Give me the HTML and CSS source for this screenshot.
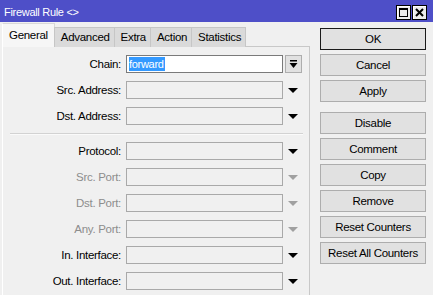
FILE: index.html
```html
<!DOCTYPE html>
<html lang="en">
<head>
    <meta charset="UTF-8">
    <title>Firewall Rule</title>
    <link rel="stylesheet" href="styles.css">
</head>
<body>
    <div class="titlebar">
        <span class="title">Firewall Rule &lt;&gt;</span>
        <div class="ctrls">
            <span class="ctrl"><span class="maxbox"></span></span>
            <span class="ctrl">
                <svg width="9" height="9" viewBox="0 0 9 9"><path d="M1 1 L8 8 M8 1 L1 8" stroke="#000" stroke-width="2"/></svg>
            </span>
        </div>
    </div>

    <div class="main">
        <div class="left">
            <div class="tabs">
                <div class="tab active">General</div>
                <div class="tab">Advanced</div>
                <div class="tab">Extra</div>
                <div class="tab">Action</div>
                <div class="tab">Statistics</div>
            </div>
            <div class="panel">
                <div class="row">
                    <label>Chain:</label>
                    <div class="field chain"><span class="sel">forward</span></div>
                    <div class="dropbtn">
                        <svg width="9" height="9" viewBox="0 0 9 9"><rect x="1" y="0" width="7" height="1.5" fill="#000"/><path d="M0.5 3 H8.5 L4.5 8 Z" fill="#000"/></svg>
                    </div>
                </div>
                <div class="row">
                    <label>Src. Address:</label>
                    <div class="field"></div>
                    <div class="arrow"></div>
                </div>
                <div class="row">
                    <label>Dst. Address:</label>
                    <div class="field"></div>
                    <div class="arrow"></div>
                </div>

                <div class="sep"></div>

                <div class="row">
                    <label>Protocol:</label>
                    <div class="field"></div>
                    <div class="arrow"></div>
                </div>
                <div class="row off">
                    <label>Src. Port:</label>
                    <div class="field"></div>
                    <div class="arrow"></div>
                </div>
                <div class="row off">
                    <label>Dst. Port:</label>
                    <div class="field"></div>
                    <div class="arrow"></div>
                </div>
                <div class="row off">
                    <label>Any. Port:</label>
                    <div class="field"></div>
                    <div class="arrow"></div>
                </div>
                <div class="row">
                    <label>In. Interface:</label>
                    <div class="field"></div>
                    <div class="arrow"></div>
                </div>
                <div class="row">
                    <label>Out. Interface:</label>
                    <div class="field"></div>
                    <div class="arrow"></div>
                </div>
            </div>
        </div>

        <div class="buttons">
            <button class="default">OK</button>
            <button>Cancel</button>
            <button>Apply</button>
            <div class="spacer"></div>
            <button>Disable</button>
            <button>Comment</button>
            <button>Copy</button>
            <button>Remove</button>
            <button>Reset Counters</button>
            <button>Reset All Counters</button>
        </div>
    </div>
</body>
</html>
```

FILE: styles.css
```css
body {
    margin: 0;
    background-color: #f0f0f0;
    font-family: "Liberation Sans", Arial, sans-serif;
    font-size: 11px;
    letter-spacing: -0.3px;
    color: #000;
    overflow: hidden;
}
.titlebar {
    height: 22px;
    background-color: #4e4fc8;
    display: flex;
    align-items: center;
    justify-content: space-between;
    padding: 0 6px 0 4px;
}
.title {
    color: #fff;
    font-size: 11px;
    padding-top: 1px;
}
.ctrls {
    display: flex;
    gap: 1px;
    margin-top: 2px;
}
.ctrl {
    width: 13px;
    height: 13px;
    border: 1px solid #000;
    background-color: #ececec;
    display: flex;
    align-items: center;
    justify-content: center;
    box-shadow: inset 1px 1px 0 #fff;
}
.maxbox {
    width: 7px;
    height: 6px;
    border: 1px solid #000;
    border-top-width: 2px;
}
.main {
    display: flex;
    padding-left: 2px;
}
.left {
    width: 308px;
    padding-top: 1px;
}
.tabs {
    display: flex;
    align-items: flex-end;
    height: 24px;
    position: relative;
    z-index: 1;
}
.tab {
    height: 19px;
    line-height: 19px;
    padding: 0 4px 0 6px;
    background-color: #dadada;
    border: 1px solid #c6c6c6;
    border-bottom: none;
    margin-right: -1px;
    font-size: 11.5px;
}
.tab.active {
    height: 23px;
    line-height: 23px;
    background-color: #f6f6f6;
    border-color: #d8d8d8;
    border-left-color: #fff;
    padding: 0 6px 0 6px;
}
.panel {
    margin-top: -1px;
    border: 1px solid #c8c8c8;
    border-left-color: #fff;
    border-bottom: none;
    height: 240px;
    padding-top: 8px;
}
.row {
    display: flex;
    align-items: center;
    height: 18px;
    margin-bottom: 8px;
}
.row label {
    width: 118px;
    text-align: right;
    margin-right: 5px;
    font-size: 11.5px;
}
.row.off label {
    color: #8d8d8d;
}
.field {
    width: 155px;
    height: 16px;
    border: 1px solid #a9a9a9;
    background-color: #f0f0f0;
}
.field.chain {
    background-color: #fff;
    border-color: #7a7a7a;
    display: flex;
    align-items: center;
    padding-left: 2px;
    width: 153px;
}
.sel {
    background-color: #3399ff;
    color: #fff;
    line-height: 14px;
    padding-right: 1px;
}
.dropbtn {
    width: 15px;
    height: 16px;
    margin-left: 2px;
    border: 1px solid #adadad;
    background-color: #e1e1e1;
    display: flex;
    align-items: center;
    justify-content: center;
}
.arrow {
    width: 0;
    height: 0;
    margin-left: 5px;
    border-left: 5px solid transparent;
    border-right: 5px solid transparent;
    border-top: 5px solid #000;
}
.row.off .arrow {
    border-top-color: #a0a0a0;
}
.sep {
    height: 1px;
    background-color: #d2d2d2;
    border-bottom: 1px solid #fafafa;
    margin: 0 6px 7px 7px;
}
.buttons {
    margin-left: 10px;
    margin-top: 6px;
    width: 106px;
    display: flex;
    flex-direction: column;
    gap: 4px;
}
.buttons button {
    height: 22px;
    border: 1px solid #adadad;
    background-color: #e1e1e1;
    font-family: inherit;
    font-size: 11.5px;
    letter-spacing: -0.3px;
    color: #000;
    padding: 0;
}
.buttons button.default {
    border-color: #1a1a1a;
}
.spacer {
    height: 2px;
}
```
